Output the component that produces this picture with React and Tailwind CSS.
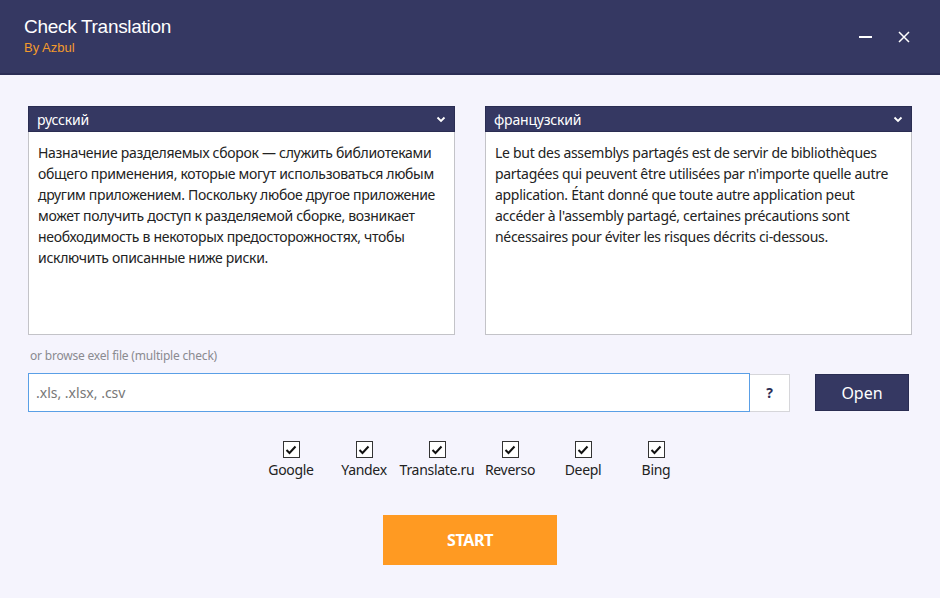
import React from 'react';

const ruText =
  'Назначение разделяемых сборок — служить библиотеками общего применения, которые могут использоваться любым другим приложением. Поскольку любое другое приложение может получить доступ к разделяемой сборке, возникает необходимость в некоторых предосторожностях, чтобы исключить описанные ниже риски.';

const frText =
  "Le but des assemblys partagés est de servir de bibliothèques partagées qui peuvent être utilisées par n'importe quelle autre application. Étant donné que toute autre application peut accéder à l'assembly partagé, certaines précautions sont nécessaires pour éviter les risques décrits ci-dessous.";

const engines = ['Google', 'Yandex', 'Translate.ru', 'Reverso', 'Deepl', 'Bing'];

const Chevron = () => (
  <svg width="10" height="7" viewBox="0 0 10 7" fill="none" stroke="white" strokeWidth="1.8">
    <path d="M1.5 1.5 L5 5 L8.5 1.5" />
  </svg>
);

const LangPanel = ({ lang, text }) => (
  <div className="flex flex-col w-[427px]">
    <div className="flex items-center justify-between h-[26px] bg-[#353862] border border-[#2a2d52] pl-[8px] pr-[8px]">
      <span className="text-white text-[14px] tracking-[-0.2px]">{lang}</span>
      <Chevron />
    </div>
    <div className="h-[203px] bg-white border border-t-0 border-[#c3c3c8] px-[9px] pt-[10px]">
      <p className="text-[14px] leading-[21px] tracking-[-0.3px] text-[#222]">{text}</p>
    </div>
  </div>
);

const Check = ({ label }) => (
  <div className="flex flex-col items-center w-[73px]">
    <div className="w-[17px] h-[17px] border border-[#333] bg-white flex items-center justify-center">
      <svg width="12" height="10" viewBox="0 0 12 10" fill="none" stroke="#111" strokeWidth="2">
        <path d="M1.5 5 L4.5 8 L10.5 1.5" />
      </svg>
    </div>
    <span className="mt-[1px] text-[14px] tracking-[-0.3px] text-[#222] whitespace-nowrap">{label}</span>
  </div>
);

export default function App() {
  return (
    <div className="w-[940px] h-[598px] bg-[#f5f4fd] flex flex-col font-['Noto_Sans',sans-serif]">
      <div className="h-[75px] bg-[#353862] border-b-2 border-[#2b2d55] flex justify-between px-[24px] shrink-0">
        <div className="pt-[15px]">
          <div className="text-white text-[19px] leading-[24px] tracking-[-0.3px] font-['Liberation_Sans',sans-serif]">Check Translation</div>
          <div className="text-[#f39a2c] text-[13px] leading-[17px] font-['Liberation_Sans',sans-serif]">By Azbul</div>
        </div>
        <div className="flex items-start gap-[26px] pt-[31px] pr-[6px]">
          <div className="w-[13px] h-[1.5px] bg-white mt-[5px]" />
          <svg width="12" height="12" viewBox="0 0 12 12" stroke="white" strokeWidth="1.5">
            <path d="M1 1 L11 11 M11 1 L1 11" />
          </svg>
        </div>
      </div>

      <div className="flex gap-[30px] pl-[28px] pt-[31px]">
        <LangPanel lang="русский" text={ruText} />
        <LangPanel lang="французский" text={frText} />
      </div>

      <div className="pl-[30px] pt-[12px] text-[12px] tracking-[-0.2px] text-[#8a8a90]">or browse exel file (multiple check)</div>

      <div className="flex items-center pl-[28px] pt-[8px]">
        <div className="w-[722px] h-[39px] bg-white border border-[#5a9fe6] flex items-center px-[7px] text-[14px] text-[#777]">
          .xls, .xlsx, .csv
        </div>
        <div className="w-[40px] h-[38px] bg-white border border-l-0 border-[#d6d6da] flex items-center justify-center text-[14px] font-bold text-[#2b2d55]">
          ?
        </div>
        <button className="ml-[25px] w-[94px] h-[37px] bg-[#353862] border border-[#2a2d52] text-white text-[16px]">
          Open
        </button>
      </div>

      <div className="flex justify-center pt-[29px] pl-[7px]">
        {engines.map((e) => (
          <Check key={e} label={e} />
        ))}
      </div>

      <div className="flex justify-center pt-[35px]">
        <button className="w-[174px] h-[50px] bg-[#ff9a22] text-white text-[16px] font-bold tracking-[-0.3px]">START</button>
      </div>
    </div>
  );
}
